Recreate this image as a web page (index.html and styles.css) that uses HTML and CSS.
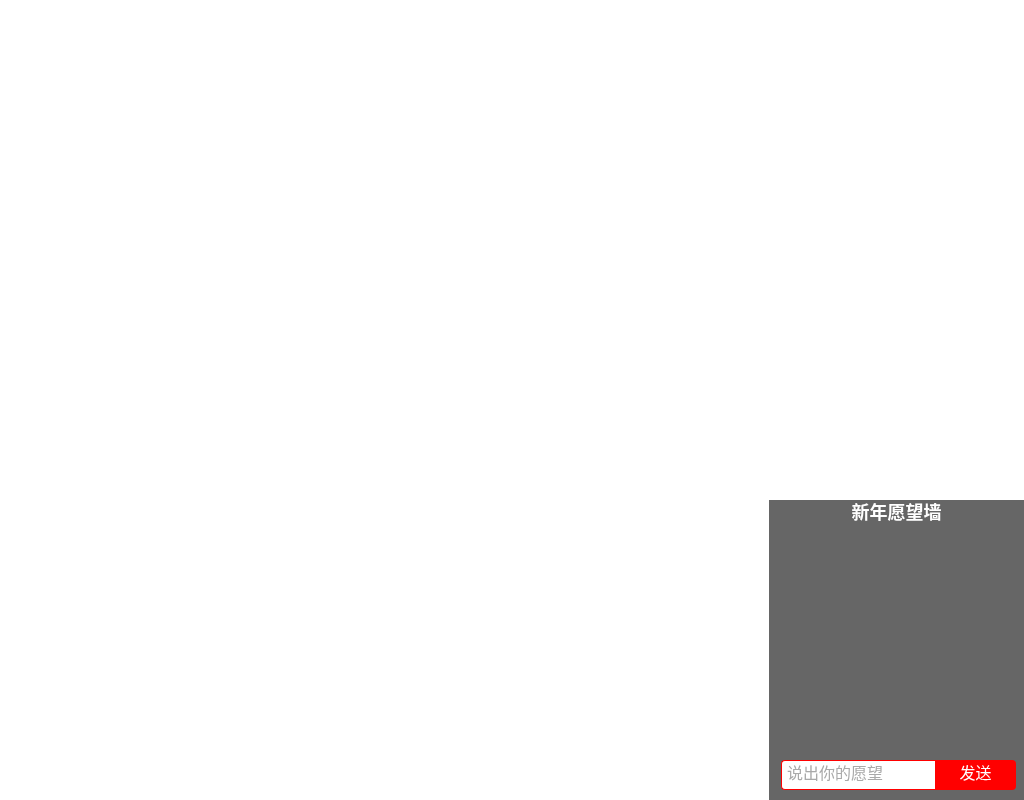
FILE: index.html
```html
<!DOCTYPE html>
<html lang="zh">
<head>
<meta charset="utf-8">
<title>新年愿望墙</title>
<link rel="stylesheet" href="styles.css">
</head>
<body>
<div class="wall">
  <div class="wall-title">新年愿望墙</div>
  <div class="wall-list"></div>
  <form class="wall-form">
    <input class="wall-input" type="text" placeholder="说出你的愿望">
    <button class="wall-send" type="button">发送</button>
  </form>
</div>
</body>
</html>
```

FILE: styles.css
```css
html, body {
  margin: 0;
  padding: 0;
  background: #ffffff;
  font-family: "Liberation Serif", "Noto Sans CJK SC", serif;
}
.wall {
  position: fixed;
  right: 0;
  bottom: 0;
  width: 255px;
  height: 300px;
  background: #666666;
  display: flex;
  flex-direction: column;
  box-sizing: border-box;
}
.wall-title {
  color: #ffffff;
  font-weight: bold;
  font-size: 18px;
  line-height: 22px;
  text-align: center;
  font-family: "Noto Sans CJK SC", sans-serif;
}
.wall-list {
  flex: 1;
}
.wall-form {
  display: flex;
  margin: 0 8px 10px 12px;
  height: 30px;
}
.wall-input {
  width: 154px;
  height: 30px;
  box-sizing: border-box;
  border: 1px solid #ff0000;
  border-right: none;
  border-radius: 4px 0 0 4px;
  padding: 0 5px 7px 5px;
  font-size: 16px;
  line-height: 20px;
  font-family: "Noto Sans CJK SC", sans-serif;
  color: #333;
  outline: none;
  margin: 0;
}
.wall-input::placeholder {
  color: #a9a9a9;
}
.wall-send {
  flex: 1;
  height: 30px;
  box-sizing: border-box;
  border: none;
  background: #ff0000;
  color: #ffffff;
  border-radius: 0 4px 4px 0;
  font-size: 16px;
  line-height: 20px;
  font-family: "Noto Sans CJK SC", sans-serif;
  padding: 0 0 7px 0;
  margin: 0;
}
```
